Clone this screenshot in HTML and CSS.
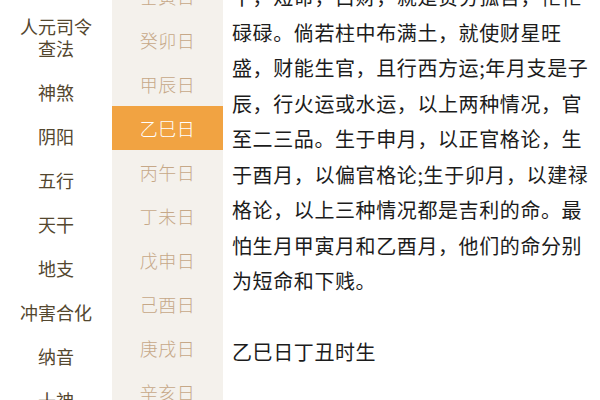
FILE: index.html
```html
<!DOCTYPE html>
<html lang="zh-CN">
<head>
<meta charset="utf-8">
<title>乙巳日</title>
<link rel="stylesheet" href="styles.css">
</head>
<body>
<div class="page">
  <nav class="cats">
    <div class="cat two">人元司令<br>查法</div>
    <div class="cat">神煞</div>
    <div class="cat">阴阳</div>
    <div class="cat">五行</div>
    <div class="cat">天干</div>
    <div class="cat">地支</div>
    <div class="cat">冲害合化</div>
    <div class="cat">纳音</div>
    <div class="cat">十神</div>
  </nav>
  <div class="days">
    <div class="day-list">
      <div class="day">壬寅日</div>
      <div class="day">癸卯日</div>
      <div class="day">甲辰日</div>
      <div class="day active">乙巳日</div>
      <div class="day">丙午日</div>
      <div class="day">丁未日</div>
      <div class="day">戊申日</div>
      <div class="day">己酉日</div>
      <div class="day">庚戌日</div>
      <div class="day">辛亥日</div>
    </div>
  </div>
  <article class="content">
    <p class="para">干，短命，白财，就是贫穷孤苦，忙忙<br>碌碌。倘若柱中布满土，就使财星旺<br>盛，财能生官，且行西方运;年月支是子<br>辰，行火运或水运，以上两种情况，官<br>至二三品。生于申月，以正官格论，生<br>于酉月，以偏官格论;生于卯月，以建禄<br>格论，以上三种情况都是吉利的命。最<br>怕生月甲寅月和乙酉月，他们的命分别<br>为短命和下贱。</p>
    <p class="para">乙巳日丁丑时生</p>
  </article>
</div>
</body>
</html>
```
FILE: styles.css
```css
html, body {
  margin: 0;
  padding: 0;
  background: #ffffff;
}
body {
  width: 600px;
  height: 400px;
  overflow: hidden;
  font-family: "Noto Sans CJK SC", "Noto Sans", sans-serif;
}
.page {
  display: flex;
  height: 400px;
  overflow: hidden;
}
.cats {
  width: 112px;
  flex: none;
  padding-top: 4px;
  display: flex;
  flex-direction: column;
}
.cat {
  padding: 11px 0;
  line-height: 22px;
  font-size: 18px;
  color: #54472f;
  text-align: center;
  white-space: nowrap;
}
.days {
  width: 111px;
  flex: none;
  background: #f4f1ec;
  overflow: hidden;
}
.day-list {
  margin-top: -26px;
  display: flex;
  flex-direction: column;
}
.day {
  height: 44px;
  line-height: 44px;
  font-size: 18px;
  font-weight: 300;
  color: #c6a888;
  text-align: center;
  letter-spacing: 0.5px;
}
.day.active {
  background: #f1a342;
  color: #ffffff;
}
.content {
  flex: 1;
  padding-left: 9px;
  margin-top: -21px;
}
.para {
  margin: 0 0 35.5px 0;
  font-size: 20px;
  line-height: 35.5px;
  letter-spacing: 0.6px;
  color: #1c1c1c;
  white-space: nowrap;
}
```
